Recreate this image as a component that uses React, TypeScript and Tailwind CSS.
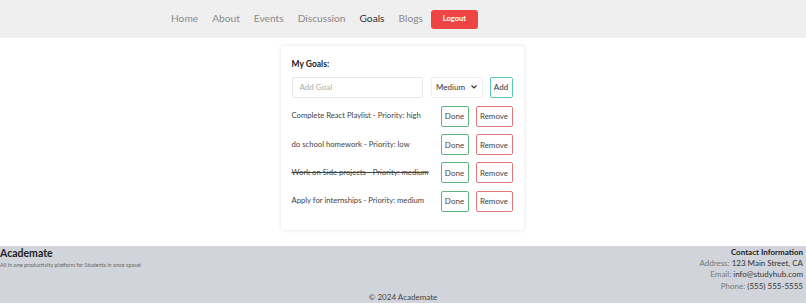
import React from "react";

const navLinks = ["Home", "About", "Events", "Discussion", "Goals", "Blogs"];

const goals = [
  { text: "Complete React Playlist - Priority: high", done: false },
  { text: "do school homework - Priority: low", done: false },
  { text: "Work on Side projects - Priority: medium", done: true },
  { text: "Apply for internships - Priority: medium", done: false },
];

export default function App() {
  return (
    <div className="min-h-[307px] bg-white font-['Lato',sans-serif] text-[#333]">
      <header className="flex h-[38px] items-center bg-[#efefef] pl-[171px]">
        <nav className="flex items-center gap-[14px] text-[10.2px] text-[#8a8a8a]">
          {navLinks.map((l) => (
            <a key={l} className={l === "Goals" ? "text-[#333]" : ""}>
              {l}
            </a>
          ))}
          <button className="ml-[-6px] h-[19px] w-[47px] rounded-[3px] bg-[#ef4444] text-[7.5px] font-bold text-white">
            Logout
          </button>
        </nav>
      </header>

      <main className="flex justify-center pt-[8px] pb-[16px] pr-[2px]">
        <div className="w-[243px] rounded-[3px] bg-white px-[11px] pt-[12px] pb-[18px] shadow-[0_0_4px_rgba(0,0,0,0.12)]">
          <h2 className="text-[8.5px] font-bold text-[#222]">My Goals:</h2>
          <div className="mt-[6px] flex items-center">
            <input
              placeholder="Add Goal"
              className="h-[21px] w-[131px] rounded-[2px] border border-[#e5e7eb] px-[7px] text-[8px] placeholder:text-[#aaa]"
            />
            <div className="ml-[8px] flex h-[21px] w-[52px] items-center justify-center gap-[6px] rounded-[2px] border border-[#eee] text-[8px] text-[#333]">
              Medium
              <svg width="6" height="4" viewBox="0 0 6 4">
                <path d="M0.5 0.5 L3 3 L5.5 0.5" fill="none" stroke="#333" strokeWidth="1.2" />
              </svg>
            </div>
            <button className="ml-[7px] h-[21px] w-[23px] rounded-[2px] border border-[#5ec6c0] text-[8px] text-[#333]">
              Add
            </button>
          </div>
          <ul className="mt-[8px] flex flex-col gap-[7.3px]">
            {goals.map((g) => (
              <li key={g.text} className="flex items-center">
                <span className={`flex-1 text-[7.7px] text-[#444] ${g.done ? "line-through" : ""}`}>
                  {g.text}
                </span>
                <button className="h-[21px] w-[28px] rounded-[2px] border border-[#5cb87a] text-[8px] text-[#444]">
                  Done
                </button>
                <button className="ml-[7px] h-[21px] w-[37px] rounded-[2px] border border-[#e07a7a] text-[8px] text-[#444]">
                  Remove
                </button>
              </li>
            ))}
          </ul>
        </div>
      </main>

      <footer className="flex h-[57px] flex-col bg-[#d1d5db]">
        <div className="flex flex-1 justify-between">
          <div>
            <h3 className="text-[10.5px] font-bold text-[#222]">Academate</h3>
            <p className="text-[5.5px] text-[#666]">All in one productivity platform for Students in once space!</p>
          </div>
          <div className="pr-[3px] pt-[1px] text-right text-[8px] leading-[11.3px] text-[#333]">
            <p className="font-bold text-[#222]">Contact Information</p>
            <p>
              <span className="text-[#777]">Address:</span> 123 Main Street, CA
            </p>
            <p>
              <span className="text-[#777]">Email:</span> info@studyhub.com
            </p>
            <p>
              <span className="text-[#777]">Phone:</span> (555) 555-5555
            </p>
          </div>
        </div>
        <p className="pb-[1px] text-center text-[8px] leading-[10px] text-[#444]">© 2024 Academate</p>
      </footer>
    </div>
  );
}
